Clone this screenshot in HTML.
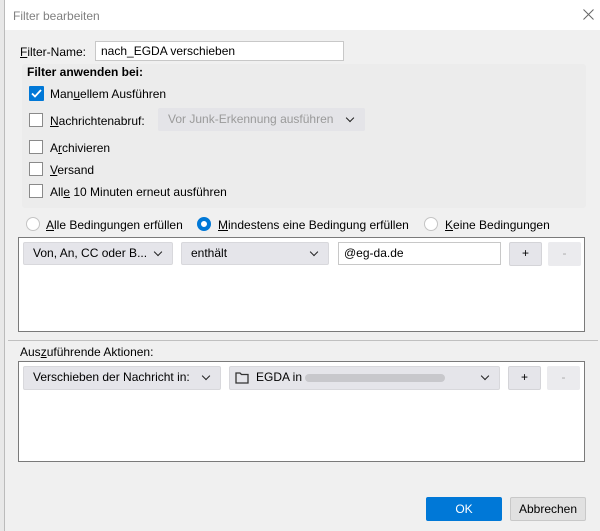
<!DOCTYPE html><html><head><style>
body{margin:0;width:600px;height:531px;background:#f0f0f0;font-family:"Liberation Sans",sans-serif;font-size:12px;color:#000;position:relative;overflow:hidden}
.a{position:absolute}
.t{position:absolute;white-space:nowrap;line-height:14px}
.cb{position:absolute;width:14px;height:14px;border:1px solid #8a8a8a;background:#fff;box-sizing:border-box}
.sel{position:absolute;background:#e5e5ea;border:1px solid #d8d8dc;border-radius:2px;box-sizing:border-box;padding:0 9px;line-height:21px;font-size:12px}
.sel:after{content:"";position:absolute;right:11px;top:6px;width:5px;height:5px;border-right:1.5px solid #222;border-bottom:1.5px solid #222;transform:rotate(45deg)}
.in{position:absolute;background:#fff;border:1px solid #c8c8c8;box-sizing:border-box;padding-left:5px;line-height:19px}
.btn{position:absolute;background:#e5e5ea;border:1px solid #d4d4d8;box-sizing:border-box;text-align:center;line-height:21px;border-radius:2px}
.rad{position:absolute;width:14px;height:14px;border-radius:50%;border:1px solid #c4c4c4;background:#fff;box-sizing:border-box}
</style></head><body>
<div class="a" style="left:0;top:0;width:4px;height:531px;background:#e8e8e8;border-right:1px solid #bbb"></div>
<div class="a" style="left:5px;top:0;width:595px;height:30px;background:#fff"></div>
<div class="t" style="left:13px;top:9px;color:#808080">Filter bearbeiten</div>
<svg class="a" style="left:583px;top:9px" width="11" height="11"><path d="M0.5 0.5l10 10M10.5 0.5l-10 10" stroke="#666" stroke-width="1"/></svg>

<div class="t" style="left:20px;top:45px"><u>F</u>ilter-Name:</div>
<div class="in" style="left:95px;top:41px;width:249px;height:20px">nach_EGDA verschieben</div>
<div class="a" style="left:22px;top:64px;width:564px;height:144px;background:#ececec;border-radius:3px"></div>
<div class="t" style="left:27px;top:65px;font-weight:bold">Filter anwenden bei:</div>
<div class="a" style="left:29px;top:86px;width:15px;height:15px;background:#0078d7;border-radius:1px"></div>
<svg class="a" style="left:29px;top:86px" width="15" height="15"><path d="M3 7.5l3 3 6-6.5" stroke="#fff" stroke-width="1.8" fill="none"/></svg>
<div class="t" style="left:50px;top:87px">Man<u>u</u>ellem Ausführen</div>
<div class="cb" style="left:29px;top:113px"></div>
<div class="t" style="left:50px;top:114px"><u>N</u>achrichtenabruf:</div>
<div class="sel" style="left:158px;top:108px;width:207px;height:23px;color:#9a9a9a;background:#e4e4e8;border-color:#e4e4e8">Vor Junk-Erkennung ausführen</div>
<div class="cb" style="left:29px;top:140px"></div>
<div class="t" style="left:50px;top:141px">A<u>r</u>chivieren</div>
<div class="cb" style="left:29px;top:162px"></div>
<div class="t" style="left:50px;top:163px"><u>V</u>ersand</div>
<div class="cb" style="left:29px;top:184px"></div>
<div class="t" style="left:50px;top:185px">All<u>e</u> 10 Minuten erneut ausführen</div>

<div class="rad" style="left:26px;top:217px"></div>
<div class="t" style="left:46px;top:218px"><u>A</u>lle Bedingungen erfüllen</div>
<div class="rad" style="left:197px;top:217px;border:4px solid #0078d7"></div>
<div class="t" style="left:218px;top:218px"><u>M</u>indestens eine Bedingung erfüllen</div>
<div class="rad" style="left:424px;top:217px"></div>
<div class="t" style="left:445px;top:218px"><u>K</u>eine Bedingungen</div>

<div class="a" style="left:18px;top:237px;width:567px;height:95px;background:#fff;border:1px solid #7a7a7a;box-sizing:border-box"></div>
<div class="sel" style="left:23px;top:242px;width:150px;height:23px">Von, An, CC oder B...</div>
<div class="sel" style="left:181px;top:242px;width:148px;height:23px">enthält</div>
<div class="in" style="left:338px;top:242px;width:163px;height:23px;line-height:21px">@eg-da.de</div>
<div class="btn" style="left:509px;top:242px;width:33px;height:24px">+</div>
<div class="btn" style="left:548px;top:242px;width:33px;height:24px;color:#aaa;background:#ebebee;border-color:#ebebee">-</div>

<div class="a" style="left:8px;top:340px;width:590px;height:1px;background:#c0c0c0"></div>
<div class="t" style="left:20px;top:345px">Aus<u>z</u>uführende Aktionen:</div>
<div class="a" style="left:18px;top:361px;width:567px;height:101px;background:#fff;border:1px solid #7a7a7a;box-sizing:border-box"></div>
<div class="sel" style="left:23px;top:366px;width:198px;height:24px">Verschieben der Nachricht in:</div>
<div class="sel" style="left:229px;top:366px;width:271px;height:24px;padding-left:26px">EGDA in <span style="display:inline-block;width:140px;height:8px;background:#c8c8cc;border-radius:4px;vertical-align:middle"></span></div>
<svg class="a" style="left:235px;top:371px" width="14" height="13"><path d="M1 2h4l1.5 1.5H13V12H1z" fill="none" stroke="#333" stroke-width="1.3"/></svg>
<div class="btn" style="left:508px;top:366px;width:33px;height:24px">+</div>
<div class="btn" style="left:547px;top:366px;width:33px;height:24px;color:#aaa;background:#ebebee;border-color:#ebebee">-</div>

<div class="btn" style="left:426px;top:497px;width:76px;height:24px;background:#0078d7;border-color:#0078d7;color:#fff;line-height:22px">OK</div>
<div class="btn" style="left:510px;top:497px;width:76px;height:24px;background:#e1e1e1;border-color:#c8c8c8;line-height:22px">Abbrechen</div>
</body></html>
